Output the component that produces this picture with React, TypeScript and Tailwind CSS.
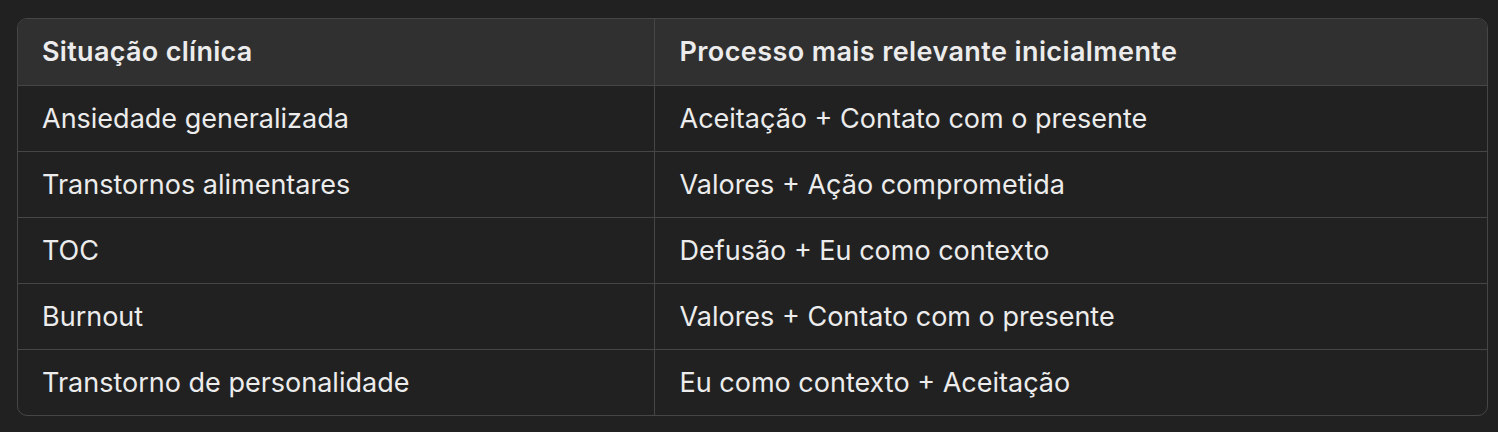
import React from 'react';

const rows: [string, string][] = [
  ['Ansiedade generalizada', 'Aceitação + Contato com o presente'],
  ['Transtornos alimentares', 'Valores + Ação comprometida'],
  ['TOC', 'Defusão + Eu como contexto'],
  ['Burnout', 'Valores + Contato com o presente'],
  ['Transtorno de personalidade', 'Eu como contexto + Aceitação'],
];

const App: React.FC = () => {
  return (
    <div className="w-[1498px] h-[432px] bg-[#212121] pt-[18px] pl-[17px] font-['Inter',sans-serif] text-[#ececec]">
      <div className="w-[1471px] rounded-[10px] border border-[#464646] overflow-hidden">
        <table className="w-full border-collapse text-[27px] leading-none">
          <thead>
            <tr className="bg-[#303030] h-[66px]">
              <th className="w-[636px] text-left font-semibold pl-[24px] border-r border-[#464646] tracking-[0.3px]">Situação clínica</th>
              <th className="text-left font-semibold pl-[25px] tracking-[0.4px]">Processo mais relevante inicialmente</th>
            </tr>
          </thead>
          <tbody>
            {rows.map(([a, b]) => (
              <tr key={a} className="h-[66px] border-t border-[#464646]">
                <td className="pl-[24px] border-r border-[#464646]">{a}</td>
                <td className="pl-[25px]">{b}</td>
              </tr>
            ))}
          </tbody>
        </table>
      </div>
    </div>
  );
};

export default App;
